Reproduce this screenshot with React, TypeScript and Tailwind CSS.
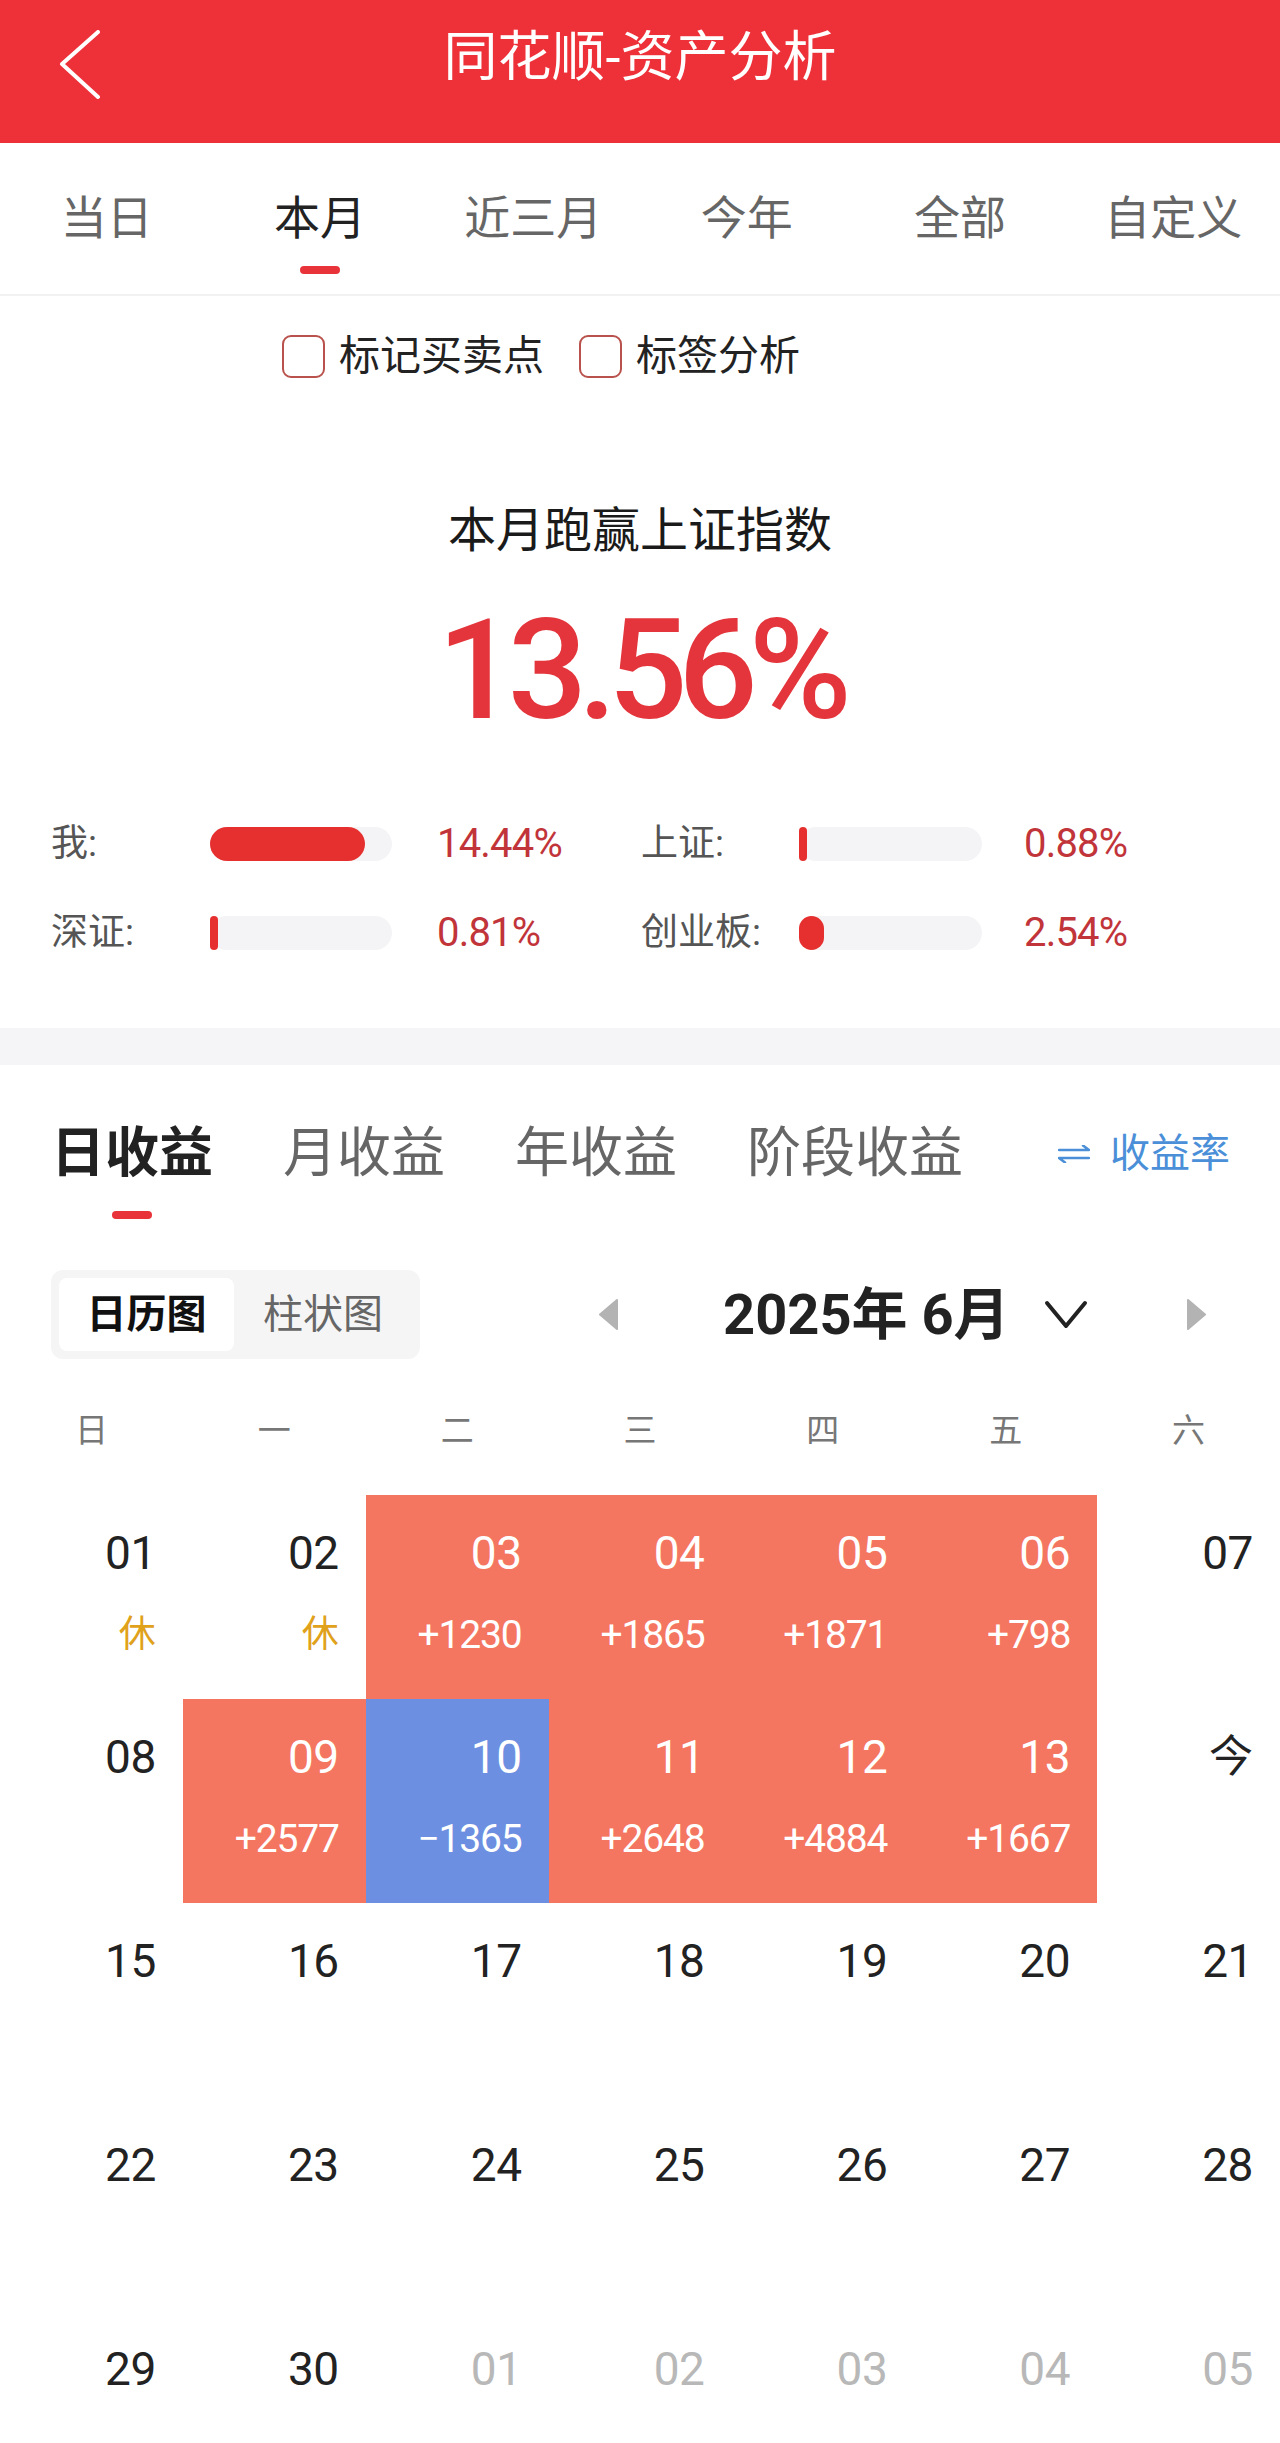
import React from 'react';

type Cell = { d: string; sub?: string; kind?: 'red' | 'blue'; rest?: boolean; muted?: boolean; cjk?: boolean };

const rows: Cell[][] = [
  [
    { d: '01', sub: '休', rest: true },
    { d: '02', sub: '休', rest: true },
    { d: '03', sub: '+1230', kind: 'red' },
    { d: '04', sub: '+1865', kind: 'red' },
    { d: '05', sub: '+1871', kind: 'red' },
    { d: '06', sub: '+798', kind: 'red' },
    { d: '07' },
  ],
  [
    { d: '08' },
    { d: '09', sub: '+2577', kind: 'red' },
    { d: '10', sub: '−1365', kind: 'blue' },
    { d: '11', sub: '+2648', kind: 'red' },
    { d: '12', sub: '+4884', kind: 'red' },
    { d: '13', sub: '+1667', kind: 'red' },
    { d: '今', cjk: true },
  ],
  ['15', '16', '17', '18', '19', '20', '21'].map((d) => ({ d })),
  ['22', '23', '24', '25', '26', '27', '28'].map((d) => ({ d })),
  [
    { d: '29' },
    { d: '30' },
    { d: '01', muted: true },
    { d: '02', muted: true },
    { d: '03', muted: true },
    { d: '04', muted: true },
    { d: '05', muted: true },
  ],
];

const tabs = ['当日', '本月', '近三月', '今年', '全部', '自定义'];
const weekdays = ['日', '一', '二', '三', '四', '五', '六'];

function CalCell({ c }: { c: Cell }) {
  const bg = c.kind === 'red' ? 'bg-[#f47661]' : c.kind === 'blue' ? 'bg-[#6c8fe1]' : 'bg-white';
  const colored = !!c.kind;
  const dateColor = colored ? 'text-white' : c.muted ? 'text-[#b8b8b8]' : 'text-[#222222]';
  return (
    <div className={`flex flex-col items-end pr-[27px] pt-[30px] ${bg}`}>
      <span className={`${c.cjk ? 'text-[44px]' : 'text-[46px] tracking-[-0.01em]'} leading-[56px] ${dateColor}`}>{c.d}</span>
      {c.sub && (
        <span
          className={`mt-[30px] leading-[48px] ${c.rest ? 'text-[37px] text-[#e0a11b]' : 'text-[39px] tracking-[-0.03em] text-white'}`}
        >
          {c.sub}
        </span>
      )}
    </div>
  );
}

export default function App() {
  return (
    <div className="w-[1280px] h-[2443px] overflow-hidden bg-white font-[family-name:Roboto,'Noto_Sans_CJK_SC',sans-serif]">
      {/* Header */}
      <div className="h-[143px] bg-[#ee3039] grid grid-cols-[1fr_auto_1fr] items-start">
        <div className="pl-[59px] pt-[30px]">
          <svg width="42" height="70" viewBox="0 0 42 70" fill="none">
            <path d="M39 2 L3 34 L39 67" stroke="white" strokeWidth="4" strokeLinecap="round" strokeLinejoin="round" />
          </svg>
        </div>
        <div className="mt-[31px] text-white text-[54px] leading-[54px]">同花顺-资产分析</div>
        <div />
      </div>

      {/* Period tabs */}
      <div className="h-[153px] border-b-2 border-[#f2f2f2] grid grid-cols-6">
        {tabs.map((t, i) => (
          <div key={t} className="flex flex-col items-center pt-[45px]">
            <span className={`text-[46px] leading-[60px] ${i === 1 ? 'text-[#222222]' : 'text-[#666666]'}`}>{t}</span>
            {i === 1 && <span className="mt-[18px] w-10 h-2 rounded-full bg-[#e8333a]" />}
          </div>
        ))}
      </div>

      {/* Checkboxes */}
      <div className="flex items-center pl-[282px] pt-[39px]">
        <span className="w-[43px] h-[43px] border-2 border-[#b9524c] rounded-[9px]" />
        <span className="ml-[14px] text-[41px] leading-[43px] text-[#222222]">标记买卖点</span>
        <span className="ml-[35px] w-[43px] h-[43px] border-2 border-[#b9524c] rounded-[9px]" />
        <span className="ml-[14px] text-[41px] leading-[43px] text-[#222222]">标签分析</span>
      </div>

      {/* Summary */}
      <div className="mt-[123px] text-center text-[48px] leading-[60px] text-[#1a1a1a]">本月跑赢上证指数</div>
      <div className="mt-[39px] text-center text-[140px] leading-[140px] font-medium tracking-[-0.065em] text-[#e3353b]">
        13.56%
      </div>

      {/* Compare bars */}
      <div className="mt-[82px] flex flex-col gap-[45px]">
        <div className="h-[44px] flex items-center pl-[51px]">
          <span className="w-[159px] text-[37px] text-[#555555]">我:</span>
          <div className="w-[182px] h-[34px] rounded-full bg-[#f4f4f6] flex">
            <div className="w-[155px] h-full rounded-full bg-[#e5302f]" />
          </div>
          <span className="ml-[45px] w-[204px] text-[40px] tracking-[-0.02em] text-[#c1343a]">14.44%</span>
          <span className="w-[158px] text-[37px] text-[#555555]">上证:</span>
          <div className="w-[183px] h-[34px] rounded-full bg-[#f4f4f6] flex">
            <div className="w-[8px] h-full rounded-full bg-[#e5302f]" />
          </div>
          <span className="ml-[42px] text-[40px] tracking-[-0.02em] text-[#c1343a]">0.88%</span>
        </div>
        <div className="h-[44px] flex items-center pl-[51px]">
          <span className="w-[159px] text-[37px] text-[#555555]">深证:</span>
          <div className="w-[182px] h-[34px] rounded-full bg-[#f4f4f6] flex">
            <div className="w-[8px] h-full rounded-full bg-[#e5302f]" />
          </div>
          <span className="ml-[45px] w-[204px] text-[40px] tracking-[-0.02em] text-[#c1343a]">0.81%</span>
          <span className="w-[158px] text-[37px] text-[#555555]">创业板:</span>
          <div className="w-[183px] h-[34px] rounded-full bg-[#f4f4f6] flex">
            <div className="w-[25px] h-full rounded-full bg-[#e5302f]" />
          </div>
          <span className="ml-[42px] text-[40px] tracking-[-0.02em] text-[#c1343a]">2.54%</span>
        </div>
      </div>

      {/* Gray band */}
      <div className="mt-[73px] h-[37px] bg-[#f5f5f7]" />

      {/* Income tabs */}
      <div className="mt-[56px] flex items-start pl-[51px] pr-[50px]">
        <div className="flex items-start gap-[70px]">
          {['日收益', '月收益', '年收益', '阶段收益'].map((t, i) => (
            <div key={t} className="flex flex-col items-center">
              <span
                className={`text-[54px] leading-[66px] ${i === 0 ? 'font-bold text-[#222222]' : 'text-[#666666]'}`}
              >
                {t}
              </span>
              {i === 0 && <span className="mt-[24px] w-10 h-2 rounded-full bg-[#e8333a]" />}
            </div>
          ))}
        </div>
        <div className="ml-auto h-[66px] flex items-center gap-[20px] text-[#4a8fd8]">
          <svg width="32" height="18" viewBox="0 0 32 18" fill="none">
            <path d="M1 5 H31 L25 0.5" stroke="#4a8fd8" strokeWidth="2.5" strokeLinecap="round" strokeLinejoin="round" />
            <path d="M31 13 H1 L7 17.5" stroke="#4a8fd8" strokeWidth="2.5" strokeLinecap="round" strokeLinejoin="round" />
          </svg>
          <span className="text-[40px] leading-[48px]">收益率</span>
        </div>
      </div>

      {/* Segmented + month nav */}
      <div className="mt-[51px] flex items-center pl-[51px]">
        <div className="w-[369px] h-[89px] bg-[#f5f5f5] rounded-[12px] p-2 flex">
          <div className="w-[175px] h-full bg-white rounded-[8px] flex items-center justify-center text-[40px] font-bold text-[#111111]">
            日历图
          </div>
          <div className="flex-1 flex items-center justify-center text-[40px] text-[#666666]">柱状图</div>
        </div>
        <svg className="ml-[178px]" width="20" height="31" viewBox="0 0 20 31">
          <path d="M19 1 L2 15.5 L19 30 Z" fill="#b3b3b3" stroke="#b3b3b3" strokeWidth="2" strokeLinejoin="round" />
        </svg>
        <span className="ml-[105px] text-[56px] leading-[66px] font-bold text-[#222222]">2025年 6月</span>
        <svg className="ml-[34px]" width="44" height="30" viewBox="0 0 44 30" fill="none">
          <path d="M3 3 L22 26 L41 3" stroke="#222222" strokeWidth="4" strokeLinecap="round" strokeLinejoin="round" />
        </svg>
        <svg className="ml-[99px]" width="20" height="31" viewBox="0 0 20 31">
          <path d="M1 1 L18 15.5 L1 30 Z" fill="#b3b3b3" stroke="#b3b3b3" strokeWidth="2" strokeLinejoin="round" />
        </svg>
      </div>

      {/* Weekdays */}
      <div className="mt-[52px] grid grid-cols-7">
        {weekdays.map((w) => (
          <div key={w} className="text-center text-[33px] leading-[40px] text-[#777777]">
            {w}
          </div>
        ))}
      </div>

      {/* Calendar */}
      <div className="mt-[44px] grid grid-cols-7 auto-rows-[204px]">
        {rows.flat().map((c, i) => (
          <CalCell key={i} c={c} />
        ))}
      </div>
    </div>
  );
}
